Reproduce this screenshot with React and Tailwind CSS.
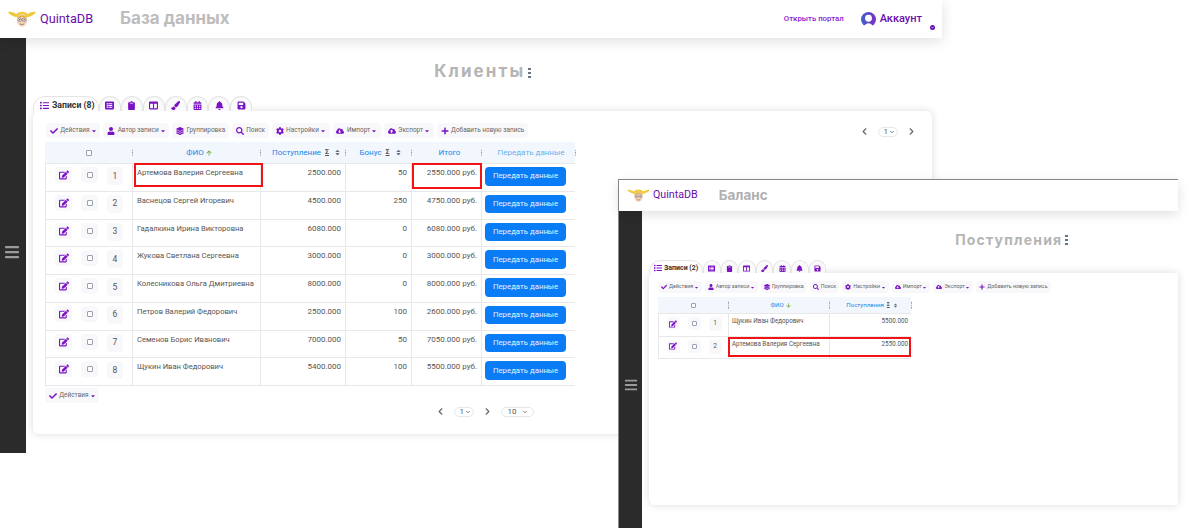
import React from "react";
import { ChevronDown, ChevronLeft, ChevronRight } from "lucide-react";
import {
  FaArrowDown,
  FaArrowUp,
  FaBars,
  FaBell,
  FaCalendarAlt,
  FaCaretDown,
  FaCheck,
  FaChevronDown,
  FaClipboard,
  FaCloudDownloadAlt,
  FaCloudUploadAlt,
  FaCog,
  FaColumns,
  FaEdit,
  FaLayerGroup,
  FaList,
  FaListAlt,
  FaPaintBrush,
  FaPlus,
  FaSave,
  FaSearch,
  FaSort,
  FaUser,
} from "react-icons/fa";

const PURPLE = "text-[#7a12c4]";
const TAB_ICONS = [FaListAlt, FaClipboard, FaColumns, FaPaintBrush, FaCalendarAlt, FaBell, FaSave];

const TOOLS = [
  { icon: FaCheck, label: "Действия", caret: true },
  { icon: FaUser, label: "Автор записи", caret: true },
  { icon: FaLayerGroup, label: "Группировка" },
  { icon: FaSearch, label: "Поиск" },
  { icon: FaCog, label: "Настройки", caret: true },
  { icon: FaCloudDownloadAlt, label: "Импорт", caret: true },
  { icon: FaCloudUploadAlt, label: "Экспорт", caret: true },
  { icon: FaPlus, label: "Добавить новую запись" },
];

const CLIENTS = [
  ["Артемова Валерия Сергеевна", "2500.000", "50", "2550.000 руб."],
  ["Васнецов Сергей Игоревич", "4500.000", "250", "4750.000 руб."],
  ["Гадалкина Ирина Викторовна", "6080.000", "0", "6080.000 руб."],
  ["Жукова Светлана Сергеевна", "3000.000", "0", "3000.000 руб."],
  ["Колесникова Ольга Дмитриевна", "8000.000", "0", "8000.000 руб."],
  ["Петров Валерий Федорович", "2500.000", "100", "2600.000 руб."],
  ["Семенов Борис Иванович", "7000.000", "50", "7050.000 руб."],
  ["Щукин Иван Федорович", "5400.000", "100", "5500.000 руб."],
];

const PAYMENTS = [
  ["Щукин Иван Федорович", "5500.000"],
  ["Артемова Валерия Сергеевна", "2550.000"],
];

const Logo = ({ className }) => (
  <svg viewBox="0 0 40 24" className={className}>
    <path d="M0 2 Q6 1 12 5 L14 3 Q20 0 26 3 L28 5 Q34 1 40 2 Q36 8 29 9 L11 9 Q4 8 0 2 Z" fill="#f0c93c" />
    <ellipse cx="20" cy="14" rx="7.5" ry="9" fill="#f0d6bc" />
    <path d="M12 11 Q20 2 28 11 Q20 7 12 11 Z" fill="#e3b52c" />
    <circle cx="16.8" cy="13" r="2.6" fill="#fff" stroke="#7b5a4a" strokeWidth="0.9" />
    <circle cx="23.2" cy="13" r="2.6" fill="#fff" stroke="#7b5a4a" strokeWidth="0.9" />
    <circle cx="16.8" cy="13" r="1" fill="#50403a" />
    <circle cx="23.2" cy="13" r="1" fill="#50403a" />
    <path d="M17 19 Q20 21 23 19" fill="none" stroke="#a0584c" strokeWidth="1" />
  </svg>
);

const AccountIcon = () => (
  <svg viewBox="0 0 24 24" className="ml-[17px] h-[15px] w-[15px]">
    <defs>
      <linearGradient id="account-fill" x1="0" y1="0" x2="1" y2="0">
        <stop offset="0" stopColor="#3f63c8" />
        <stop offset="1" stopColor="#7a2fc8" />
      </linearGradient>
    </defs>
    <circle cx="12" cy="12" r="12" fill="url(#account-fill)" />
    <circle cx="12" cy="10" r="5.5" fill="#fff" />
    <path d="M3.5 24 Q12 12 20.5 24 Z" fill="#fff" />
  </svg>
);

const Dots = ({ className, big }) => (
  <span className={`flex flex-col ${big ? "gap-[1.5px]" : "gap-px"} ${className}`}>
    <i className={`block ${big ? "h-[2.5px] w-[2.5px] bg-gray-500" : "h-[1.5px] w-[1.5px] bg-gray-400"}`} />
    <i className={`block ${big ? "h-[2.5px] w-[2.5px] bg-gray-500" : "h-[1.5px] w-[1.5px] bg-gray-400"}`} />
    <i className={`block ${big ? "h-[2.5px] w-[2.5px] bg-gray-500" : "h-[1.5px] w-[1.5px] bg-gray-400"}`} />
  </span>
);

const Tabs = ({ label, small }) => (
  <div className={small ? "flex h-[13px] items-end" : "flex h-[15px] items-end"}>
    <div
      className={`flex items-center rounded-t-xl border-x-[1.5px] border-t-[1.5px] border-[#e4e4e4] bg-white font-bold text-[#333] ${
        small
          ? "h-[13px] w-[54px] gap-[2px] pl-[4px] pt-[2px] text-[7px]"
          : "h-[15px] w-[66px] gap-[3px] pl-[6px] pt-[3px] text-[8.7px]"
      }`}
    >
      <FaList className={`${PURPLE} ${small ? "text-[8px]" : "text-[9px]"}`} />
      {label}
    </div>
    {TAB_ICONS.map((Icon, i) => (
      <div
        key={i}
        className={`flex items-center justify-center rounded-t-xl border-x-[1.5px] border-t-[1.5px] border-[#e4e4e4] bg-[#fafafa] ${
          small ? "h-[13px] w-[17.6px] pt-[2px]" : "h-[15px] w-[21.9px] pt-[3px]"
        }`}
      >
        <Icon className={`${PURPLE} ${small ? "text-[7px]" : "text-[9px]"}`} />
      </div>
    ))}
  </div>
);

const Toolbar = ({ small }) => (
  <div className={small ? "flex h-[12px] gap-[3px]" : "ml-[1px] flex h-[15px] gap-[3px]"}>
    {TOOLS.map(({ icon: Icon, label, caret }) => (
      <ToolButton key={label} icon={Icon} label={label} caret={caret} small={small} />
    ))}
  </div>
);

const ToolButton = ({ icon: Icon, label, caret, small }) => (
  <div
    className={`flex w-fit items-center rounded-sm bg-[#f8f8fa] text-[#666] ${
      small ? "h-[12px] gap-[2px] px-[3px] text-[5.3px]" : "h-[15px] gap-[2.5px] px-[3.75px] text-[6.45px]"
    }`}
  >
    <Icon className={`${PURPLE} ${small ? "text-[6px]" : "text-[8px]"}`} />
    {label}
    {caret && <FaCaretDown className={`-ml-[1.5px] ${PURPLE} ${small ? "text-[5px]" : "text-[6px]"}`} />}
  </div>
);

const HeadCell = ({ children, className = "" }) => (
  <div className={`relative flex items-center justify-center gap-[2px] ${className}`}>
    {children}
    <Dots className="absolute right-[-1px] top-1/2 -translate-y-1/2" />
  </div>
);

const Sum = ({ small }) => (
  <span className={`flex items-center text-[#555] ${small ? "ml-[1px] gap-[3px] text-[5px]" : "ml-[2px] gap-[5px] text-[7px]"}`}>
    <span className="font-bold underline">Σ</span>
    <FaSort className="text-gray-500" />
  </span>
);

const RowControls = ({ n, small }) => (
  <div className={`flex items-start justify-center ${small ? "gap-[8px]" : "gap-[9px]"}`}>
    <span className={`flex items-center justify-center rounded-sm bg-[#f8f8fa] ${small ? "h-[13px] w-[13px]" : "h-[16px] w-[17px]"}`}>
      <FaEdit className={`${PURPLE} ${small ? "text-[8px]" : "text-[10px]"}`} />
    </span>
    <span className={`flex items-center justify-center rounded-sm bg-[#f8f8fa] ${small ? "h-[13px] w-[13px]" : "h-[16px] w-[17px]"}`}>
      <i className={`block rounded-[1px] border border-gray-400 bg-white ${small ? "h-[5px] w-[5px]" : "h-[6px] w-[6px]"}`} />
    </span>
    <span
      className={`flex items-center justify-center rounded-sm bg-[#f8f8fa] text-[#555] ${
        small ? "h-[14px] w-[13px] text-[6.5px]" : "h-[18px] w-[16px] text-[8.5px]"
      }`}
    >
      {n}
    </span>
  </div>
);

const RedBox = ({ className }) => <div className={`absolute border-2 border-[#f01414] ${className}`} />;

const ClientsTable = () => (
  <div className="w-[530px] border-b border-[#e4e8ec] text-[8px]">
    <div className="grid h-[21px] grid-cols-[87px_128px_85px_66px_70px_94px] bg-[#f1f7fc] text-[#1a86e8]">
      <HeadCell>
        <i className="block h-[6px] w-[6px] rounded-[1px] border border-gray-400 bg-white" />
      </HeadCell>
      <HeadCell className="pl-[6px]">
        ФИО <FaArrowUp className="text-[6px] text-[#7fae5a]" />
      </HeadCell>
      <HeadCell className="pl-[8px]">
        Поступление <Sum />
      </HeadCell>
      <HeadCell className="pl-[5px]">
        Бонус <Sum />
      </HeadCell>
      <HeadCell className="pl-[7px]">Итого</HeadCell>
      <HeadCell className="pl-[6px] text-[#6bb0ee]">Передать данные</HeadCell>
    </div>
    {CLIENTS.map((row, i) => (
      <div
        key={row[0]}
        className="grid h-[27.75px] grid-cols-[87px_128px_85px_66px_70px_94px] border-t border-[#e8e8e8] text-[#555]"
      >
        <div className="border-l border-[#e8e8e8] pt-[3px]">
          <RowControls n={i + 1} />
        </div>
        <div className="relative whitespace-nowrap border-l border-[#e8e8e8] pl-[4px] pt-[3px] text-[7.6px]">
          {row[0]}
          {i === 0 && <RedBox className="left-[1px] top-[-1px] h-[24px] w-[129px]" />}
        </div>
        <div className="border-l border-[#e8e8e8] pr-[4px] pt-[3px] text-right">{row[1]}</div>
        <div className="border-l border-[#e8e8e8] pr-[4px] pt-[3px] text-right">{row[2]}</div>
        <div className="relative border-l border-[#e8e8e8] pr-[4px] pt-[3px] text-right">
          {row[3]}
          {i === 0 && <RedBox className="left-[0px] top-[-1px] h-[26px] w-[70px]" />}
        </div>
        <div className="border-l border-[#e8e8e8] pl-[3px] pt-[3px]">
          <button className="h-[18.5px] w-[81px] rounded-sm bg-[#0a7cf5] text-[7.8px] text-[#e6f1ff]">
            Передать данные
          </button>
        </div>
      </div>
    ))}
  </div>
);

const PaymentsTable = () => (
  <div className="w-[253px] border-b border-[#e4e8ec] text-[6.1px]">
    <div className="grid h-[16px] grid-cols-[70px_101px_82px] bg-[#f1f7fc] text-[#1a86e8]">
      <HeadCell>
        <i className="block h-[5px] w-[5px] rounded-[1px] border border-gray-400 bg-white" />
      </HeadCell>
      <HeadCell className="pl-[4px]">
        ФИО <FaArrowDown className="text-[5px] text-[#7fae5a]" />
      </HeadCell>
      <HeadCell className="pl-[4px]">
        Поступления <Sum small />
      </HeadCell>
    </div>
    {PAYMENTS.map((row, i) => (
      <div key={row[0]} className="grid h-[22.5px] grid-cols-[70px_101px_82px] border-t border-[#e8e8e8] text-[#555]">
        <div className="border-l border-[#e8e8e8] pl-[1px] pt-[3px]">
          <RowControls n={i + 1} small />
        </div>
        <div className="relative whitespace-nowrap border-l border-[#e8e8e8] pl-[3px] pt-[3px] text-[6.3px]">
          {row[0]}
          {i === 1 && <RedBox className="left-[-1px] top-[0px] h-[20px] w-[183px]" />}
        </div>
        <div className="border-l border-[#e8e8e8] pr-[3px] pt-[3px] text-right text-[6.3px]">{row[1]}</div>
      </div>
    ))}
  </div>
);

const Pager = ({ value, wide }) => (
  <span
    className={`flex h-[10px] items-center rounded-full border border-gray-200 text-[8px] text-[#555] ${
      wide ? "w-[33px] justify-center gap-[5px]" : "w-[20px] justify-end gap-[1px] pr-[2px]"
    }`}
  >
    {value}
    <ChevronDown size={6} strokeWidth={3} />
  </span>
);

export default function App() {
  return (
    <div className="relative h-[528px] w-[1200px] overflow-hidden bg-white font-['Roboto',sans-serif]">
      {/* Клиенты */}
      <div className="flex h-[453px] w-[942px] flex-col">
        <header className="z-10 flex h-[38px] shrink-0 items-center bg-white pl-[8px] shadow-[0_3px_14px_rgba(0,0,0,0.13)]">
          <Logo className="h-[18px] w-[28px]" />
          <span className="ml-[4px] text-[12.7px] text-[#6a0dad]">QuintaDB</span>
          <span className="ml-[27px] font-['Inter',sans-serif] text-[17px] font-bold text-[#bdbdbd]">База данных</span>
          <span className="ml-auto text-[7.8px] font-medium text-[#8a22cf]">Открыть портал</span>
          <AccountIcon />
          <span className="ml-[4px] text-[11px] font-medium text-[#6a0dad]">Аккаунт</span>
          <span className="ml-[8px] mr-[7px] mt-[16px] flex h-[5px] w-[5px] items-center justify-center rounded-full bg-[#6a0dad]">
            <FaChevronDown className="text-[3px] text-white" />
          </span>
        </header>
        <div className="flex flex-1">
          <aside className="flex w-[26px] shrink-0 items-center justify-center bg-[#2b2b2b] pr-[3px] pt-[13px]">
            <FaBars className="text-[16px] text-[#9a9a9a]" />
          </aside>
          <main className="flex-1 pl-[7px] pr-[10px]">
            <h1 className="mt-[23px] flex h-[22px] items-center justify-center gap-[3px] font-['Inter',sans-serif] text-[17px] font-bold tracking-[2.1px] text-[#b5b5b5]">
              Клиенты
              <Dots big className="mt-[2px]" />
            </h1>
            <div className="mt-[13px]">
              <Tabs label="Записи (8)" />
            </div>
            <section className="h-[323px] rounded-md bg-white px-[12px] pt-[12px] shadow-[0_0_8px_rgba(0,0,0,0.14)]">
              <div className="flex items-start justify-between">
                <Toolbar />
                <div className="mr-[3px] flex items-center gap-[8px] pt-[3px] text-[#666]">
                  <ChevronLeft size={11} strokeWidth={2.5} />
                  <Pager value="1" />
                  <ChevronRight size={11} strokeWidth={2.5} />
                </div>
              </div>
              <div className="mt-[4px]">
                <ClientsTable />
              </div>
              <div className="mt-[2px]">
                <ToolButton icon={FaCheck} label="Действия" caret />
              </div>
              <div className="ml-[390px] mt-[3px] flex w-fit items-center gap-[8px] text-[#666]">
                <ChevronLeft size={11} strokeWidth={2.5} />
                <Pager value="1" />
                <ChevronRight size={11} strokeWidth={2.5} />
                <Pager value="10" wide />
              </div>
            </section>
          </main>
        </div>
      </div>

      {/* Баланс */}
      <div className="absolute left-[618px] top-[179px] flex h-[349px] w-[560px] flex-col border-l border-t border-[#8a8a8a] bg-white">
        <header className="z-10 flex h-[31px] shrink-0 items-center bg-white pl-[8px] shadow-[0_3px_12px_rgba(0,0,0,0.13)]">
          <Logo className="h-[15px] w-[23px]" />
          <span className="ml-[3px] text-[10.7px] text-[#6a0dad]">QuintaDB</span>
          <span className="ml-[21px] font-['Inter',sans-serif] text-[13.5px] font-bold text-[#b0b0b0]">Баланс</span>
        </header>
        <div className="flex flex-1">
          <aside className="flex w-[23px] shrink-0 items-center justify-center bg-[#2b2b2b] pt-[30px]">
            <FaBars className="text-[14px] text-[#9a9a9a]" />
          </aside>
          <main className="flex-1 pl-[7px]">
            <h1 className="ml-[196px] mt-[20px] flex h-[17px] items-center justify-center gap-[3px] font-['Inter',sans-serif] text-[14px] font-bold tracking-[1.2px] text-[#b5b5b5]">
              Поступления
              <Dots big className="mt-[1px]" />
            </h1>
            <div className="mt-[12px]">
              <Tabs label="Записи (2)" small />
            </div>
            <section className="h-[232px] rounded-l-md bg-white pl-[9px] pt-[8px] shadow-[0_0_8px_rgba(0,0,0,0.14)]">
              <Toolbar small />
              <div className="mt-[4px]">
                <PaymentsTable />
              </div>
            </section>
          </main>
        </div>
      </div>
    </div>
  );
}
